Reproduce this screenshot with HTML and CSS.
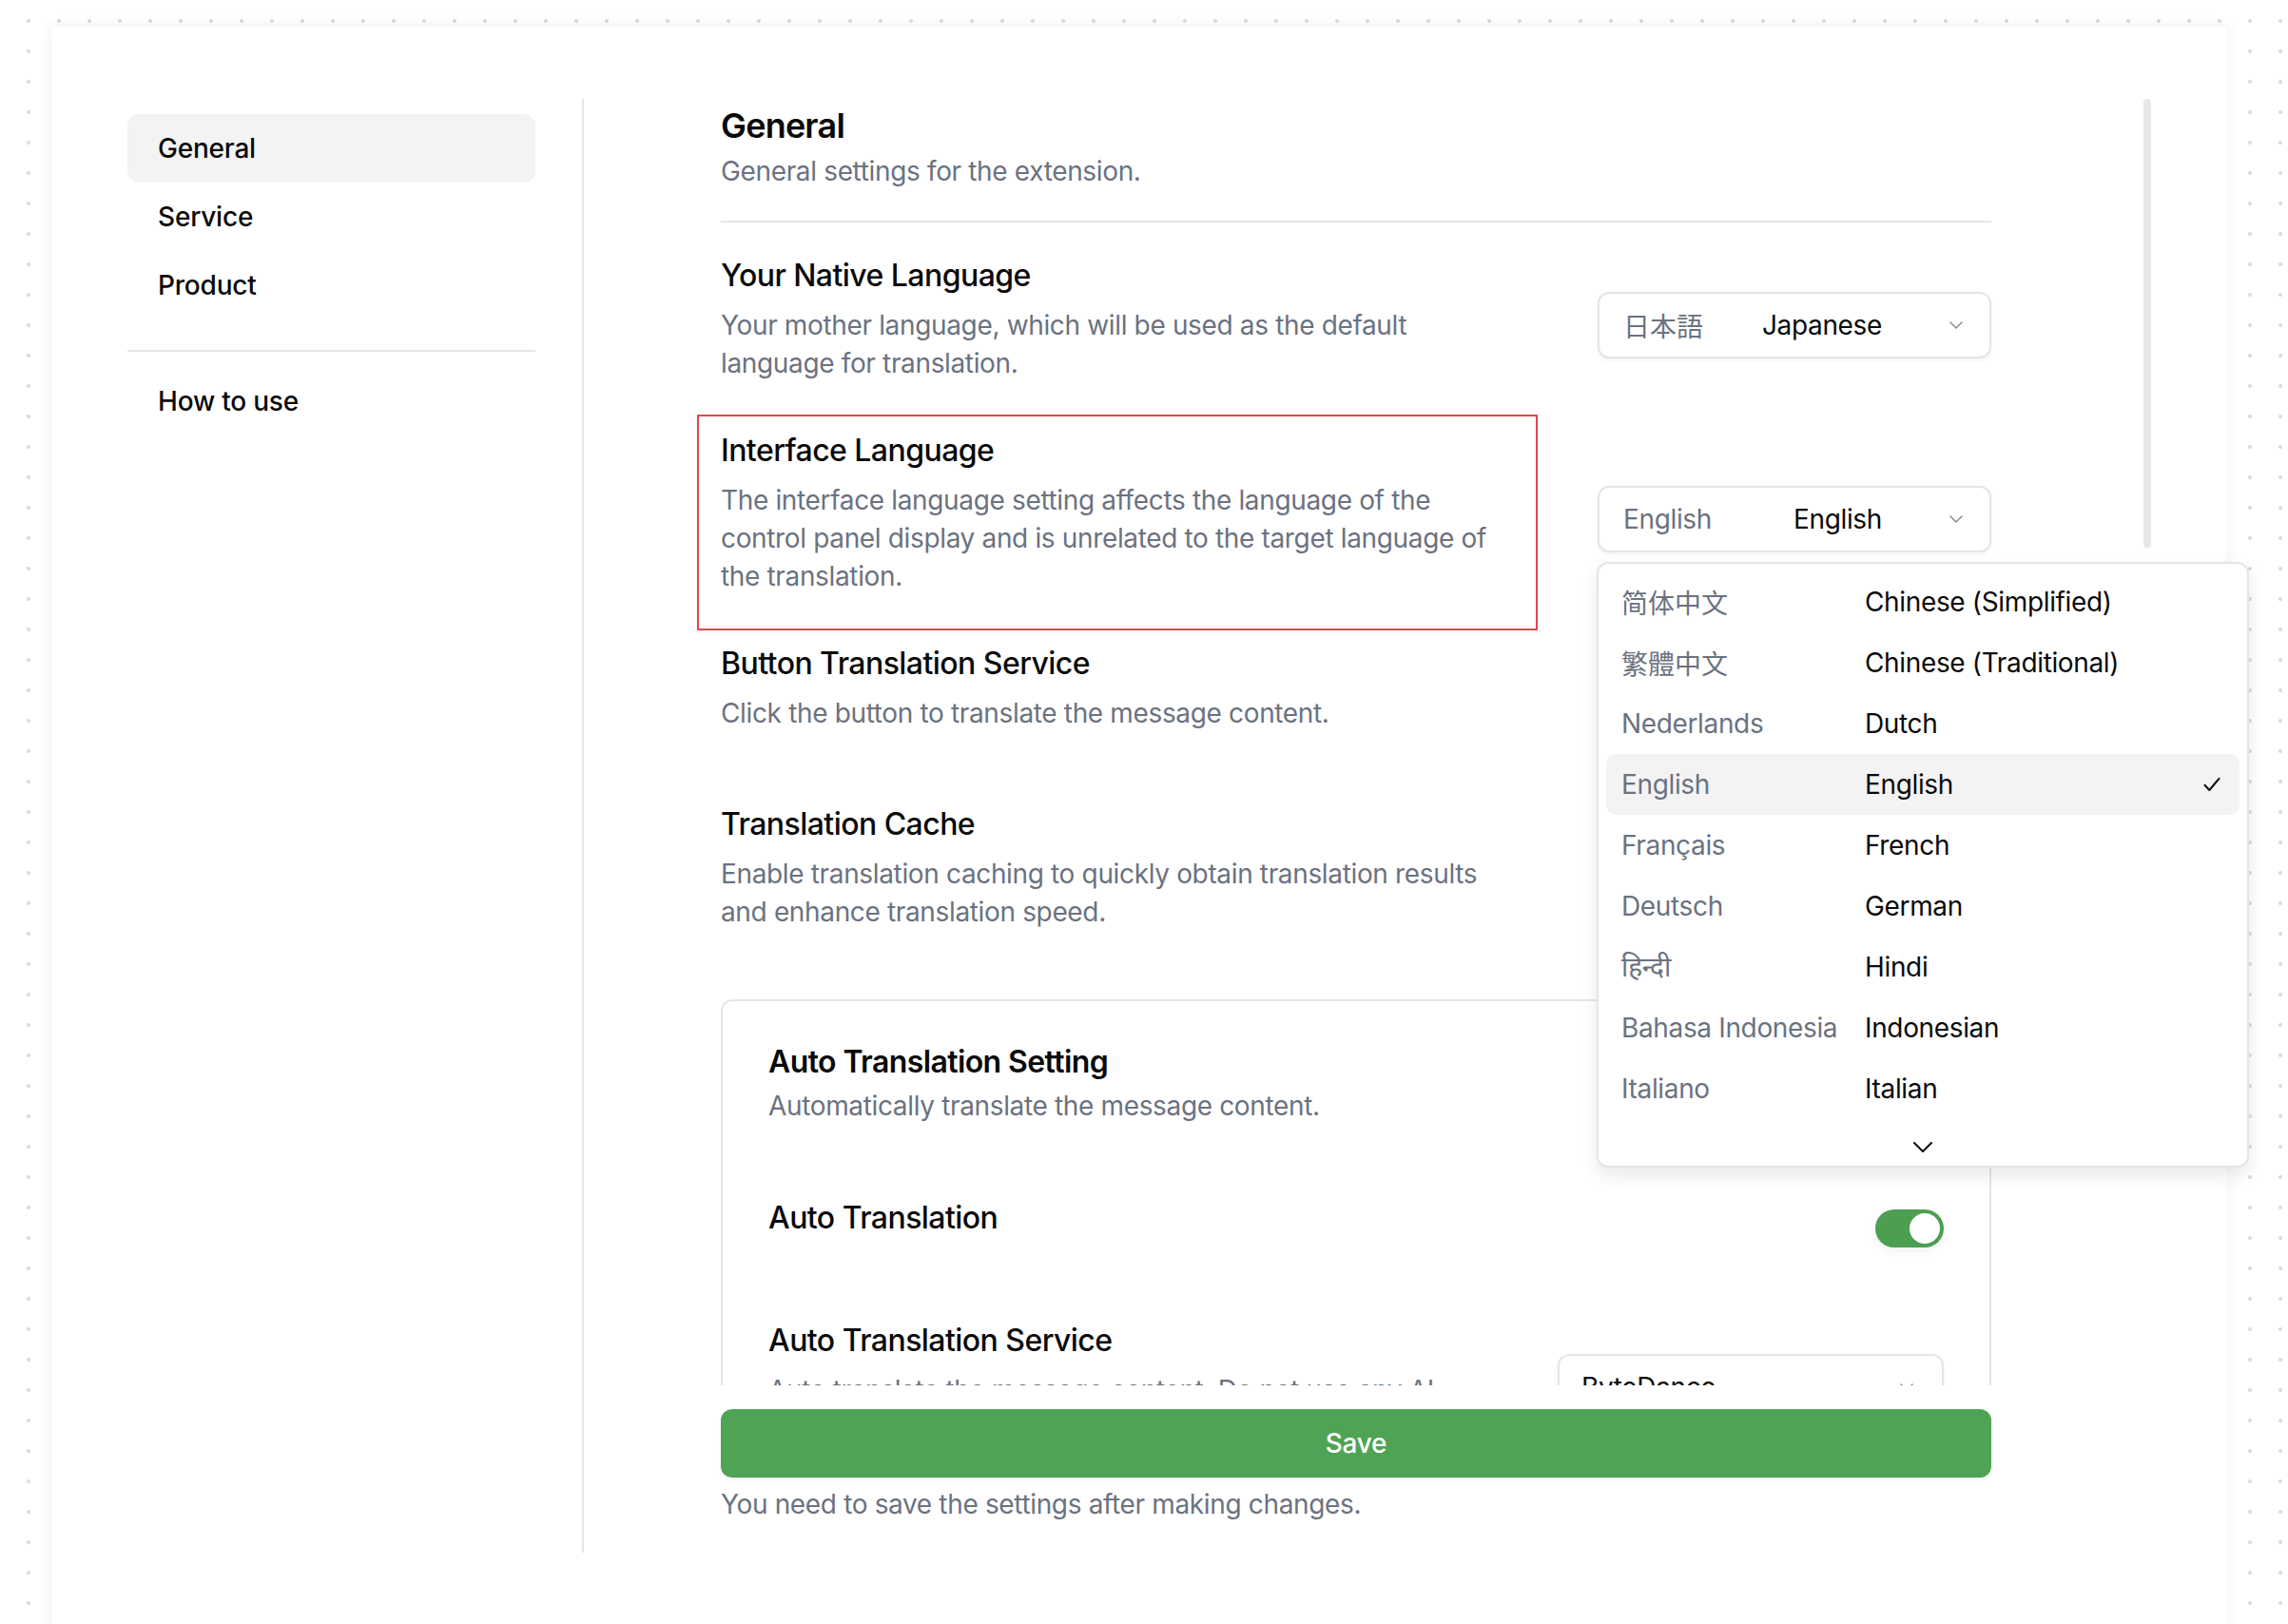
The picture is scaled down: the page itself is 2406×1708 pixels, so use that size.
FILE: index.html
```html
<!DOCTYPE html>
<html lang="en">
<head>
<meta charset="utf-8">
<title>Settings</title>
<link rel="stylesheet" href="styles.css">
</head>
<body>
<div class="panel">
  <aside class="side">
    <nav class="nav">
      <a class="nav-item active">General</a>
      <a class="nav-item">Service</a>
      <a class="nav-item">Product</a>
      <div class="nav-sep"></div>
      <a class="nav-item">How to use</a>
    </nav>
  </aside>

  <main class="main">
    <div class="scroll">
      <div class="content">
        <h2 class="page-title">General</h2>
        <p class="page-desc">General settings for the extension.</p>
        <div class="page-sep"></div>

        <div class="row row-first">
          <div class="row-text">
            <h3 class="row-title">Your Native Language</h3>
            <p class="row-desc">Your mother language, which will be used as the default language for translation.</p>
          </div>
          <div class="select">
            <span class="sel-native cjk-jp">日本語</span>
            <span class="sel-en">Japanese</span>
            <svg class="chev" viewBox="0 0 14 8" width="14" height="8"><path d="M1 1l6 6 6-6" fill="none" stroke="#8a8a8f" stroke-width="1.5" stroke-linecap="round" stroke-linejoin="round"/></svg>
          </div>
        </div>

        <div class="row">
          <div class="row-text marked">
            <h3 class="row-title">Interface Language</h3>
            <p class="row-desc">The interface language setting affects the language of the control panel display and is unrelated to the target language of the translation.</p>
            <div class="mark"></div>
          </div>
          <div class="select">
            <span class="sel-native">English</span>
            <span class="sel-en">English</span>
            <svg class="chev" viewBox="0 0 14 8" width="14" height="8"><path d="M1 1l6 6 6-6" fill="none" stroke="#8a8a8f" stroke-width="1.5" stroke-linecap="round" stroke-linejoin="round"/></svg>
          </div>
        </div>

        <div class="row row-tall">
          <div class="row-text">
            <h3 class="row-title">Button Translation Service</h3>
            <p class="row-desc">Click the button to translate the message content.</p>
          </div>
        </div>

        <div class="row">
          <div class="row-text">
            <h3 class="row-title">Translation Cache</h3>
            <p class="row-desc">Enable translation caching to quickly obtain translation results and enhance translation speed.</p>
          </div>
        </div>

        <section class="card">
          <h3 class="card-title">Auto Translation Setting</h3>
          <p class="card-desc">Automatically translate the message content.</p>

          <div class="card-row card-row-toggle">
            <h3 class="row-title">Auto Translation</h3>
            <span class="toggle"><span class="knob"></span></span>
          </div>

          <div class="card-row card-row-service">
            <div class="card-row-text">
              <h3 class="row-title">Auto Translation Service</h3>
              <p class="row-desc">Auto translate the message content. Do not use any AI service without your permission.</p>
            </div>
            <div class="select select-service">
              <span class="sel-plain">ByteDance</span>
              <svg class="chev" viewBox="0 0 14 8" width="14" height="8"><path d="M1 1l6 6 6-6" fill="none" stroke="#8a8a8f" stroke-width="1.5" stroke-linecap="round" stroke-linejoin="round"/></svg>
            </div>
          </div>
        </section>
      </div>
      <div class="thumb"></div>
    </div>

    <button class="save">Save</button>
    <p class="note">You need to save the settings after making changes.</p>
  </main>

  <div class="dropdown">
    <ul class="options">
      <li class="opt"><span class="opt-native cjk-sc">简体中文</span><span class="opt-en">Chinese (Simplified)</span></li>
      <li class="opt"><span class="opt-native cjk-tc">繁體中文</span><span class="opt-en">Chinese (Traditional)</span></li>
      <li class="opt"><span class="opt-native">Nederlands</span><span class="opt-en">Dutch</span></li>
      <li class="opt opt-selected"><span class="opt-native">English</span><span class="opt-en">English</span>
        <svg class="check" viewBox="0 0 18 16" width="18" height="16"><path d="M1.5 8.8l4.8 5.2L16.5 1.8" fill="none" stroke="#111" stroke-width="2.1" stroke-linecap="round" stroke-linejoin="round"/></svg>
      </li>
      <li class="opt"><span class="opt-native">Français</span><span class="opt-en">French</span></li>
      <li class="opt"><span class="opt-native">Deutsch</span><span class="opt-en">German</span></li>
      <li class="opt"><span class="opt-native">हिन्दी</span><span class="opt-en">Hindi</span></li>
      <li class="opt"><span class="opt-native">Bahasa Indonesia</span><span class="opt-en">Indonesian</span></li>
      <li class="opt"><span class="opt-native">Italiano</span><span class="opt-en">Italian</span></li>
    </ul>
    <div class="more">
      <svg viewBox="0 0 20 11" width="20" height="11"><path d="M1 1l9 9 9-9" fill="none" stroke="#111" stroke-width="2" stroke-linecap="round" stroke-linejoin="round"/></svg>
    </div>
  </div>
</div>
</body>
</html>
```

FILE: styles.css
```css
* { box-sizing: border-box; }

html, body {
  margin: 0;
  padding: 0;
  height: 1708px;
  overflow: hidden;
}

body {
  font-family: "Inter", "Noto Sans", "Noto Sans CJK JP", sans-serif;
  color: #0a0a0a;
  letter-spacing: -0.35px;
  background-color: #ffffff;
  background-image: radial-gradient(circle at 16px 16px, #dcdce3 0, #dcdce3 1.6px, rgba(220,220,227,0) 2.4px);
  background-size: 32px 32px;
  background-position: 14px 6px;
}

.cjk-jp { font-family: "Noto Sans CJK JP", "Inter", sans-serif; letter-spacing: 0; }
.cjk-sc { font-family: "Noto Sans CJK SC", "Inter", sans-serif; letter-spacing: 0; }
.cjk-tc { font-family: "Noto Sans CJK TC", "Inter", sans-serif; letter-spacing: 0; }

h2, h3, p, ul { margin: 0; padding: 0; }

.panel {
  position: relative;
  margin: 28px 0 0 54px;
  width: 2288px;
  height: 1700px;
  background: #ffffff;
  box-shadow: 0 0 14px rgba(0, 0, 0, 0.07);
  display: flex;
  padding: 76px 78px 0 80px;
}

/* ---------- sidebar ---------- */
.side {
  flex: 0 0 478px;
  padding-top: 16px;
}

.nav {
  width: 429px;
  display: flex;
  flex-direction: column;
}

.nav-item {
  display: flex;
  align-items: center;
  height: 72px;
  padding: 0 32px;
  font-size: 28px;
  line-height: 40px;
  font-weight: 500;
  letter-spacing: -0.2px;
  color: #0a0a0a;
  border-radius: 12px;
}

.nav-item.active { background: #f3f3f4; }

.nav-sep {
  height: 2px;
  background: #e6e6e8;
  margin: 32px 0 16px;
}

/* ---------- main ---------- */
.main {
  flex: 0 0 1652px;
  height: 1529px;
  border-left: 2px solid #e6e6e8;
  display: flex;
  flex-direction: column;
}

.scroll {
  position: relative;
  height: 1353px;
  overflow: hidden;
  padding-left: 144px;
  flex: none;
}

.content {
  width: 1336px;
  display: flex;
  flex-direction: column;
}

.thumb {
  position: absolute;
  right: 2px;
  top: 0;
  width: 8px;
  height: 472px;
  border-radius: 4px;
  background: #e6e7ea;
}

.page-title {
  font-size: 36px;
  line-height: 56px;
  font-weight: 600;
  letter-spacing: -0.8px;
  color: #0a0a0a;
}

.page-desc {
  font-size: 28px;
  line-height: 40px;
  color: #6b7280;
}

.page-sep {
  height: 2px;
  background: #e6e6e8;
  margin-top: 32px;
}

.row {
  display: flex;
  justify-content: space-between;
  align-items: center;
  margin-top: 48px;
}

.row-first { margin-top: 32px; }
.row-tall { margin-bottom: 25px; }

.row-text {
  width: 834px;
  position: relative;
}

.row-title {
  font-size: 32px;
  line-height: 48px;
  font-weight: 500;
  letter-spacing: -0.55px;
  color: #0a0a0a;
}

.row-desc {
  margin-top: 8px;
  font-size: 28px;
  line-height: 40px;
  color: #6b7280;
}

.mark {
  position: absolute;
  top: -14px;
  left: -25px;
  right: -25px;
  bottom: -37px;
  border: 2px solid #e3474d;
  box-shadow: 0 2px 3px rgba(0, 0, 0, 0.06);
}

.select {
  flex: 0 0 414px;
  height: 70px;
  margin-top: 16px;
  display: flex;
  align-items: center;
  padding: 0 28px 0 25px;
  border: 2px solid #e5e5e7;
  border-radius: 12px;
  background: #fff;
  box-shadow: 0 2px 4px rgba(0, 0, 0, 0.05);
  font-size: 28px;
  line-height: 40px;
}

.sel-native {
  flex: none;
  color: #6b7280;
}

.sel-en {
  flex: 1;
  text-align: right;
  color: #0a0a0a;
}

.chev {
  flex: none;
  margin-left: 71px;
}

/* ---------- card ---------- */
.card {
  margin-top: 72px;
  border: 2px solid #e6e6e8;
  border-radius: 12px;
  padding: 40px 48px 60px 48px;
}

.card-title {
  font-size: 32px;
  line-height: 48px;
  font-weight: 600;
  letter-spacing: -0.6px;
}

.card-desc {
  margin-top: 2px;
  font-size: 28px;
  line-height: 40px;
  color: #6b7280;
}

.card-row {
  display: flex;
  justify-content: space-between;
  align-items: flex-start;
}

.card-row-toggle { margin-top: 74px; }
.card-row-service { margin-top: 74px; }

.card-row-text { width: 760px; }

.toggle {
  margin-top: 15px;
  width: 72px;
  height: 40px;
  border-radius: 20px;
  background: #4c9e51;
  display: flex;
  align-items: center;
  justify-content: flex-end;
  padding: 0 4px;
  box-shadow: 0 4px 8px rgba(0, 0, 0, 0.06);
}

.knob {
  width: 32px;
  height: 32px;
  border-radius: 50%;
  background: #ffffff;
}

.select-service {
  flex: 0 0 406px;
  margin-top: 38px;
  padding: 0 30px 0 23px;
  justify-content: space-between;
}

.sel-plain { color: #0a0a0a; }

.select-service .chev { margin-left: 0; }

/* ---------- footer ---------- */
.save {
  flex: none;
  margin: 25px 0 0 144px;
  width: 1336px;
  height: 72px;
  border: none;
  border-radius: 12px;
  background: #4fa354;
  color: #ffffff;
  font-family: inherit;
  font-size: 28px;
  font-weight: 500;
  line-height: 40px;
  letter-spacing: -0.3px;
  box-shadow: 0 2px 4px rgba(0, 0, 0, 0.06);
}

.note {
  margin: 8px 0 0 144px;
  font-size: 28px;
  line-height: 40px;
  color: #6b7280;
}

/* ---------- dropdown ---------- */
.dropdown {
  position: absolute;
  left: 1625px;
  top: 563px;
  width: 686px;
  height: 637px;
  background: #ffffff;
  border: 2px solid #e5e5e7;
  border-radius: 12px;
  box-shadow: 0 8px 18px rgba(0, 0, 0, 0.09);
  padding: 8px;
  display: flex;
  flex-direction: column;
}

.options { list-style: none; }

.opt {
  display: flex;
  align-items: center;
  height: 64px;
  padding: 0 20px 0 16px;
  border-radius: 10px;
  font-size: 28px;
  line-height: 40px;
}

.opt-selected { background: #f3f3f4; }

.opt-native {
  flex: 0 0 256px;
  color: #6b7280;
  white-space: nowrap;
}

.opt-en {
  flex: 1;
  color: #0a0a0a;
}

.check { flex: none; }

.more {
  flex: 1;
  display: flex;
  justify-content: center;
  padding-top: 24px;
}
```
